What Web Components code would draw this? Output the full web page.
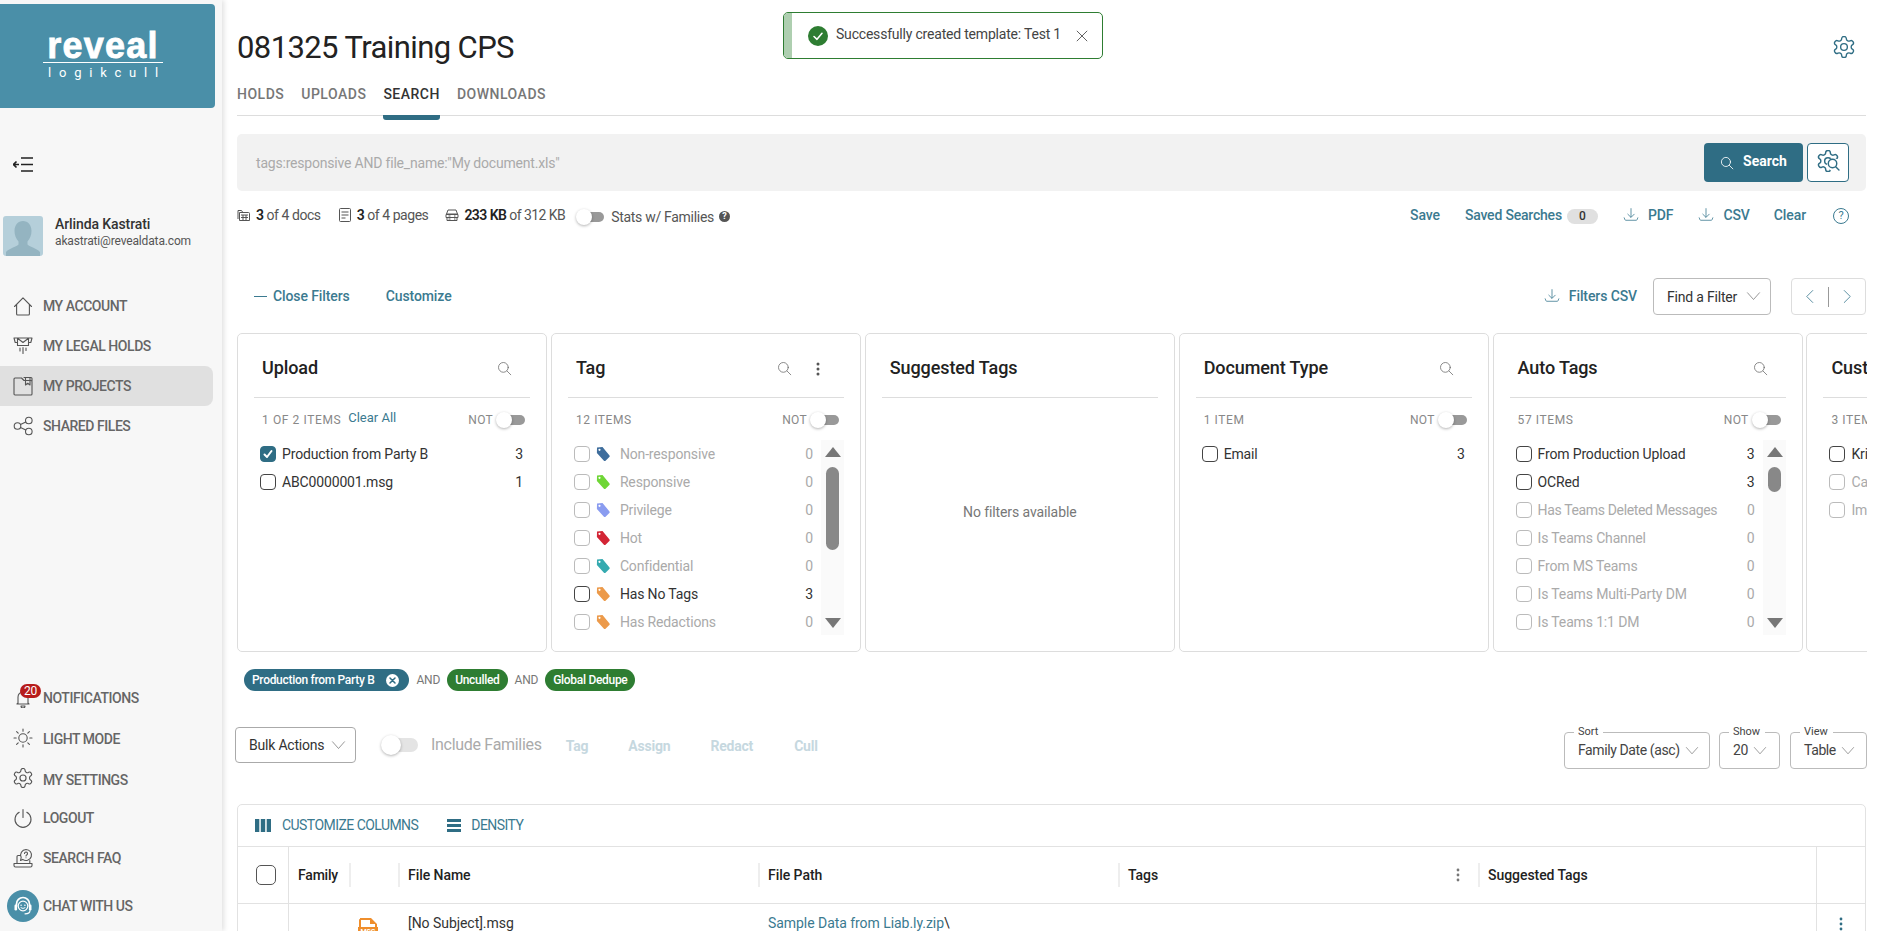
<!DOCTYPE html>
<html lang="en"><head><meta charset="utf-8"><title>Search</title>
<style>
html,body{margin:0;height:100%;background:#fff;overflow:hidden}
body{font-family:Roboto,"Liberation Sans",sans-serif;color:#333}
rv-app{display:flex;height:931px;width:1882px;overflow:hidden}
</style></head><body>
<rv-app></rv-app>
<script>
const S='fill="none" stroke="currentColor" stroke-linecap="round" stroke-linejoin="round"';
const GEAR='M12.22 2h-.44a2 2 0 0 0-2 2v.18a2 2 0 0 1-1 1.73l-.43.25a2 2 0 0 1-2 0l-.15-.08a2 2 0 0 0-2.73.73l-.22.38a2 2 0 0 0 .73 2.73l.15.1a2 2 0 0 1 1 1.72v.51a2 2 0 0 1-1 1.74l-.15.09a2 2 0 0 0-.73 2.73l.22.38a2 2 0 0 0 2.73.73l.15-.08a2 2 0 0 1 2 0l.43.25a2 2 0 0 1 1 1.73V20a2 2 0 0 0 2 2h.44a2 2 0 0 0 2-2v-.18a2 2 0 0 1 1-1.73l.43-.25a2 2 0 0 1 2 0l.15.08a2 2 0 0 0 2.73-.73l.22-.39a2 2 0 0 0-.73-2.73l-.15-.08a2 2 0 0 1-1-1.74v-.5a2 2 0 0 1 1-1.74l.15-.09a2 2 0 0 0 .73-2.73l-.22-.38a2 2 0 0 0-2.73-.73l-.15.08a2 2 0 0 1-2 0l-.43-.25a2 2 0 0 1-1-1.73V4a2 2 0 0 0-2-2z';
const ICONS={
 home:`<path d="M1.5 10.5 10 1.8l8.5 8.7M3.6 8.6V18a1 1 0 0 0 1 1h10.8a1 1 0 0 0 1-1V8.600"/>`,
 hold:`<path d="M1 2h18l-1.200 4.500H15.500M1 2l1.200 4.500H4.500M4.500 2v7.500h11V2M4.500 2.200 10 6.500l5.500-4.300M7 12v3M10 11.500v6M13 12v2.500"/>`,
 project:`<path d="M2 2h6.500l2.500 2.500h7a1 1 0 0 1 1 1V18a1 1 0 0 1-1 1H2a1 1 0 0 1-1-1V3a1 1 0 0 1 1-1zM11 1.500h7a1 1 0 0 1 1 1v2.500M12.500 2v7l2.200-1.700L17 9V2"/>`,
 share:`<circle cx="4.500" cy="10" r="3.300"/><circle cx="15.800" cy="4.500" r="3.300"/><circle cx="15.800" cy="15.500" r="3.300"/><path d="m7.500 8.500 5.300-2.500M7.500 11.500l5.300 2.500"/>`,
 bell:`<path d="M4 16h12M5 16V9a5 5 0 0 1 10 0v7M16 16l-1-1M4 16l1-1M8 18a2 2 0 0 0 4 0z"/>`,
 sun:`<circle cx="10" cy="10" r="4.200"/><path d="M10 1v2.200M10 16.800V19M1 10h2.200M16.800 10H19M3.600 3.600l1.600 1.600M14.800 14.800l1.600 1.600M3.600 16.400l1.600-1.600M14.800 5.200l1.600-1.600"/>`,
 power:`<path d="M10 1.500v8M6.200 4.300a8 8 0 1 0 7.600 0"/>`,
 faq:`<path d="M4 15.500V8.500a1 1 0 0 1 1-1h2.500M1 15.500h18v2a1.500 1.500 0 0 1-1.500 1.500h-15A1.500 1.500 0 0 1 1 17.500zM16.800 15.500v-3"/><path d="M13 1.500a5.500 5.500 0 1 1-3.300 9.900L7.500 12.500l.7-3A5.500 5.500 0 0 1 13 1.500z"/><path d="M11.500 5.500a1.500 1.500 0 1 1 2.200 1.400c-.5.300-.7.600-.7 1.100M13 9.700v.1"/>`,
 search:`<circle cx="8.500" cy="8.500" r="6.500"/><path d="m13.400 13.400 5 5"/>`,
 down:`<path d="M10 2v10.500M6 9l4 4 4-4M1.500 13.500l1 2.500a1 1 0 0 0 1 .6h13a1 1 0 0 0 1-.6l1-2.500"/>`,
 chev:`<path d="m2 5 8 9 8-9"/>`,
 left:`<path d="M13 2 5 10l8 8"/>`,
 right:`<path d="m7 2 8 8-8 8"/>`,
 x:`<path d="m3 3 14 14M17 3 3 17"/>`,
};
const ic=(n,size,sw=1)=>`<svg viewBox="0 0 20 20" width="${size}" height="${size}" ${S} stroke-width="${sw}" style="display:block;flex:none">${ICONS[n]}</svg>`;
const gear=(size,sw)=>`<svg viewBox="1.500 1.500 21 21" width="${size}" height="${size}" ${S} stroke-width="${sw}" style="display:block;flex:none"><path d="${GEAR}"/><circle cx="12" cy="12" r="3.200"/></svg>`;
class Base extends HTMLElement{
  connectedCallback(){ if(this.shadowRoot) return; this.attachShadow({mode:'open'}).innerHTML=`<style>${this.css()}</style>${this.html()}`; }
  a(n,d=''){return this.getAttribute(n)??d}
  css(){return ':host{display:block}'} html(){return '<slot></slot>'}
}
const def=(n,c)=>customElements.define(n,c);

def('rv-toggle',class extends Base{
  css(){return `:host{display:inline-block;flex:none;position:relative;width:var(--w,22px);height:var(--k,16px)}
  i{position:absolute;right:0;top:3px;bottom:3px;left:4px;border-radius:7px;background:var(--track,#999)}
  b{position:absolute;left:0;top:0;width:var(--k,16px);height:var(--k,16px);border-radius:50%;background:#fff;box-shadow:0 1px 3px rgba(0,0,0,.3)}`}
  html(){return '<i></i><b></b>'}
});
def('rv-check',class extends Base{
  css(){return `:host{display:block;flex:none;width:16px;height:16px;box-sizing:border-box;border:1px solid var(--c,#444);border-radius:4px;background:#fff}
  :host([on]){background:#2f6d84;border-color:#2f6d84;color:#fff}
  svg{display:block;margin:1px}`}
  html(){return this.hasAttribute('on')?`<svg viewBox="0 0 12 12" width="12" height="12" fill="none" stroke="#fff" stroke-width="2" stroke-linecap="round" stroke-linejoin="round"><path d="m2.500 6.500 2.500 2.500 4.500-6"/></svg>`:''}
});
def('rv-nav-item',class extends Base{
  css(){return `:host{display:flex;align-items:center;height:40px;padding-left:13px;gap:10px;font-size:14px;font-weight:500;letter-spacing:-.45px;color:#666;position:relative;width:200px;border-radius:0 8px 8px 0;white-space:nowrap}
  :host([active]){background:#e0e0e0}
  .i{width:20px;height:20px;color:#555;flex:none}
  .t{margin-top:var(--dy,0)}`}
  html(){return `<span class="i"><slot name="icon"></slot></span><span class="t"><slot></slot></span>`}
});
def('rv-sidebar',class extends Base{
  css(){return `:host{display:flex;flex-direction:column;flex:none;width:222px;height:931px;background:#f7f7f7;box-shadow:2px 0 5px rgba(0,0,0,.12);position:relative;z-index:2}
  .logo{margin-top:4px;width:215px;height:104px;background:#4a8fa8;border-radius:0 4px 4px 0;color:#fff;display:flex;flex-direction:column;align-items:center;box-sizing:border-box;padding:24px 9px 0 0}
  .rev{font:700 36px/36px "Liberation Sans",sans-serif;letter-spacing:1.200px;-webkit-text-stroke:.8px #fff;height:34px}
  .ln{width:120px;height:1px;background:#fff;margin-top:0}
  .lk{font:400 13px/16px Roboto,sans-serif;letter-spacing:7.800px;margin:2px 0 0 8px;white-space:nowrap}
  .col{margin:49px 0 0 13px;height:15px;color:#222}
  .user{display:flex;margin:44px 0 0 3px;height:40px;gap:12px}
  .av{width:40px;height:40px;border-radius:3px;background:#b5cfda;overflow:hidden;flex:none}
  .n{font-size:14px;font-weight:500;color:#333;line-height:15px;letter-spacing:-.1px;margin-top:1px}
  .e{font-size:12px;color:#555;line-height:15px;margin-top:2px;letter-spacing:-.15px}
  nav{margin-top:30px;display:flex;flex-direction:column}
  nav.b{margin-top:auto;padding-bottom:5px}
  .chat{margin-top:8px}
  .circ{position:absolute;left:-6px;top:-6px;width:32px;height:32px;border-radius:50%;background:#4a8fa8;display:flex;align-items:center;justify-content:center;color:#fff}
  .badge{position:absolute;left:7px;top:-4px;width:21px;height:14px;line-height:14px;border-radius:8px;background:#b71c1c;color:#fff;font-size:12px;text-align:center;font-weight:400;letter-spacing:-.2px}
  .w{position:relative;display:block;width:20px;height:20px}`}
  html(){const it=(n,t,x='')=>`<rv-nav-item ${x}><span slot="icon" class="w" style="color:#555">${n}</span>${t}</rv-nav-item>`;
   return `<div class="logo"><div class="rev">reveal</div><div class="ln"></div><div class="lk">logikcull</div></div>
   <div class="col"><svg width="20" height="15" viewBox="0 0 20 15" fill="none" stroke="currentColor" stroke-width="1.600" style="display:block"><path d="M8 1h12M8 7.500h12M8 14h12M0 7.500h6M3.500 4.500l-3 3 3 3"/></svg></div>
   <div class="user"><div class="av"><svg viewBox="0 0 40 40" width="40" height="40" style="display:block"><path fill="#94b4c1" d="M20 5c5 0 8.500 4 8.500 10 0 4-1.500 8-4 10.500v3c1.500 2 9 3.500 12.500 7.500v4H3v-4c3.500-4 11-5.500 12.500-7.500v-3c-2.500-2.500-4-6.500-4-10.500C11.500 9 15 5 20 5z"/></svg></div>
     <div><div class="n">Arlinda Kastrati</div><div class="e">akastrati@revealdata.com</div></div></div>
   <nav>${it(ic('home',20,1.100),'MY ACCOUNT')}${it(ic('hold',20,1.100),'MY LEGAL HOLDS')}${it(ic('project',20,1.100),'MY PROJECTS','active')}${it(ic('share',20,1.100),'SHARED FILES')}</nav>
   <nav class="b">${it(ic('bell',20,1.100)+'<span class="badge">20</span>','NOTIFICATIONS')}${it(ic('sun',20,1.100),'LIGHT MODE','style="--dy:1px"')}${it(gear(20,1.200),'MY SETTINGS','style="--dy:3px"')}${it(ic('power',20,1.100),'LOGOUT')}${it(ic('faq',20,1.100),'SEARCH FAQ')}
   <rv-nav-item class="chat"><span slot="icon" class="w"><span class="circ"><svg viewBox="0 0 24 24" width="24" height="24" fill="none" stroke="#fff" stroke-width="1.700" stroke-linecap="round"><path d="M5.500 12v-2a6.500 6.500 0 0 1 13 0v2"/><rect x="3.500" y="10.500" width="2.600" height="6" rx="1.200" fill="#fff" stroke="none"/><rect x="17.900" y="10.500" width="2.600" height="6" rx="1.200" fill="#fff" stroke="none"/><circle cx="12" cy="12" r="4.800" stroke-width="1.200"/><circle cx="10.100" cy="11.300" r=".8" fill="#fff" stroke="none"/><circle cx="13.900" cy="11.300" r=".8" fill="#fff" stroke="none"/><path d="M10 13.800q2 1.500 4 0" stroke-width="1"/><path d="M19 16.500c0 2-2 3.300-5 3.300" stroke-width="1.200"/></svg></span></span>CHAT WITH US</rv-nav-item></nav>`}
});
def('rv-toast',class extends Base{
  css(){return `:host{position:absolute;left:783px;top:12px;width:320px;height:47px;box-sizing:border-box;border:1px solid #2e7d32;border-radius:5px;background:#fff;display:flex;align-items:center;overflow:hidden;font-size:14px;color:#444;z-index:5}
  .s{width:8px;align-self:stretch;background:#aecfb0;flex:none}
  .c{margin-left:16px;margin-right:8px;flex:none}
  .t{width:224px;white-space:nowrap;position:relative;top:-2px;letter-spacing:-.2px}
  .x{margin-left:15px;color:#333}`}
  html(){return `<span class="s"></span><svg class="c" width="20" height="20" viewBox="0 0 20 20"><circle cx="10" cy="10" r="10" fill="#2e7d32"/><path d="m6 10.500 3 2.800 5-6" fill="none" stroke="#fff" stroke-width="1.600" stroke-linecap="round" stroke-linejoin="round"/></svg><span class="t"><slot></slot></span><span class="x">${ic('x',14,1.100)}</span>`}
});
def('rv-tabs',class extends Base{
  css(){return `:host{display:flex;gap:17px;height:31px;margin-top:16px;border-bottom:1px solid #ddd;font-size:14px;font-weight:500;letter-spacing:.5px;color:#777}
  span{line-height:20px;position:relative;height:31px}
  .on{color:#333}
  .on::after{content:"";position:absolute;left:0;right:0;top:31px;height:5px;background:#2f6d84;border-radius:0 0 3px 3px}`}
  html(){return `<span>HOLDS</span><span>UPLOADS</span><span class="on">SEARCH</span><span>DOWNLOADS</span>`}
});
def('rv-header',class extends Base{
  css(){return `:host{display:block;position:relative;padding-top:28px}
  h1{margin:0;font-size:31px;line-height:40px;font-weight:400;color:#222;letter-spacing:-.6px}
  .g{position:absolute;right:11px;top:36px;color:#2f6d84}`}
  html(){return `<h1>081325 Training CPS</h1><span class="g">${gear(22,1.300)}</span><rv-tabs></rv-tabs>`}
});
def('rv-searchbar',class extends Base{
  css(){return `:host{display:flex;align-items:center;margin-top:18px;height:57px;background:#f2f2f2;border-radius:5px;padding:0 17px 0 19px;font-size:14px;color:#aaa}
  .q{flex:1;letter-spacing:-.2px}
  .b{width:99px;height:39px;box-sizing:border-box;background:#2f6d84;border-radius:4px;color:#fff;font-weight:700;display:flex;align-items:center;justify-content:center;gap:9px;font-size:14px}
  .b span{position:relative;top:-2px}
  .g{margin-left:4px;width:42px;height:39px;box-sizing:border-box;background:#fff;border:1px solid #2f6d84;border-radius:4px;position:relative;color:#2f6d84;display:flex;align-items:center;justify-content:flex-start;padding:0 0 3px 9px}
  .m{position:absolute;left:19px;top:14px;background:#fff;border-radius:50%;color:#2f6d84}`}
  html(){return `<span class="q"><slot></slot></span><div class="b">${ic('search',14,1.200)}<span>Search</span></div><div class="g">${gear(22,1.400)}<span class="m">${ic('search',13,2.200)}</span></div>`}
});
def('rv-stat',class extends Base{
  css(){return `:host{display:inline-flex;align-items:center;gap:5px;font-size:14px;color:#555;white-space:nowrap;letter-spacing:-.45px}
  ::slotted(b){color:#222;font-weight:600}`}
  html(){return `<slot name="i"></slot><span><slot></slot></span>`}
});
def('rv-link',class extends Base{
  css(){return `:host{display:inline-flex;align-items:center;gap:9px;font-size:14px;font-weight:500;color:#3b7a90;white-space:nowrap;letter-spacing:-.1px}`}
  html(){const d=this.hasAttribute('dl');return `${d?`<span style="color:#3b7a90">${ic('down',16,1)}</span>`:''}<span><slot></slot></span>`}
});
def('rv-stats',class extends Base{
  css(){return `:host{display:flex;align-items:center;margin-top:14px;height:20px;color:#444}
  .sp{flex:1}
  rv-stat+rv-stat{margin-left:17px}
  .ttl{font-size:14px;color:#555;margin:4px 0 0 7px;letter-spacing:-.3px;white-space:nowrap}
  .h{margin:3px 0 0 5px;width:11px;height:11px;border-radius:50%;background:#555;color:#fff;font-size:9px;line-height:11px;text-align:center;font-weight:700}
  rv-toggle{--w:28px;margin:3px 0 0 11px}
  .bd{display:inline-block;width:31px;height:15px;line-height:15px;border-radius:8px;background:#e0e0e0;color:#333;text-align:center;margin-left:5px;font-size:12px;font-weight:500;position:relative;top:1px}
  .q{margin:2px 17px 0 27px;color:#3b7a90;width:16px;height:16px;box-sizing:border-box;border:1px solid #3b7a90;border-radius:50%;text-align:center;font-size:11px;line-height:14px}
  `}
  html(){const svg=(p)=>`<svg slot="i" viewBox="0 0 14 14" width="14" height="14" fill="none" stroke="#555" stroke-width="1" style="display:block">${p}</svg>`;
  return `<rv-stat>${svg('<path d="M1 11V2.500h3.500l1 1.500"/><path d="M2.500 12.500V4.500h9a1 1 0 0 1 1 1v7z" fill="#fff"/><path d="M4 7h7M4 9.500h7M6 7v5M9 7v5"/>')}<b>3</b> of 4 docs</rv-stat>
  <rv-stat>${svg('<rect x="1.500" y=".5" width="11" height="13" rx="1"/><path d="M3.500 4h7M3.500 7h7M3.500 10h4"/>')}<b>3</b> of 4 pages</rv-stat>
  <rv-stat style="letter-spacing:-.55px">${svg('<path d="M3 2h8l1.500 4h-11zM1 6.500h12v3H1zM2 9.500h10v3H2zM3.500 8h2M3.500 11h2M9 8h1.500M9 11h1.500"/>')}<b>233 KB</b> of 312 KB</rv-stat>
  <rv-toggle></rv-toggle><span class="ttl">Stats w/ Families</span><span class="h">?</span>
  <span class="sp"></span>
  <rv-link>Save</rv-link><rv-link style="margin-left:25px;letter-spacing:-.2px">Saved Searches</rv-link><span class="bd">0</span>
  <rv-link dl style="margin-left:25px">PDF</rv-link><rv-link dl style="margin-left:25px">CSV</rv-link><rv-link style="margin-left:24px">Clear</rv-link><span class="q">?</span>`}
});
def('rv-dropbtn',class extends Base{
  css(){return `:host{display:inline-flex;align-items:center;justify-content:space-between;box-sizing:border-box;height:37px;padding:0 9px 0 13px;border:1px solid #bbb;border-radius:4px;font-size:14px;color:#333;white-space:nowrap;background:#fff;letter-spacing:-.2px}`}
  html(){return `<span><slot></slot></span><span style="color:#666;margin-left:6px">${ic('chev',15,.9)}</span>`}
});
def('rv-filterbar',class extends Base{
  css(){return `:host{display:flex;align-items:center;margin-top:53px;height:37px;padding-left:17px}
  .d{width:13px;height:1.500px;background:#3b7a90;margin-right:6px}
  .sp{flex:1}
  rv-link{margin-bottom:2px}
  .p{width:75px;height:37px;box-sizing:border-box;border:1px solid #ddd;border-radius:4px;display:flex;align-items:center;justify-content:space-around;margin-left:20px;color:#3b7a90;padding:0 6px;position:relative}
  .p i{width:1px;height:20px;background:#999}`}
  html(){return `<span class="d"></span><rv-link>Close Filters</rv-link><rv-link style="margin-left:36px">Customize</rv-link><span class="sp"></span><rv-link dl style="margin-right:16px">Filters CSV</rv-link><rv-dropbtn style="width:118px">Find a Filter</rv-dropbtn><div class="p">${ic('left',15,1.100)}<i></i>${ic('right',15,1.100)}</div>`}
});
def('rv-tag',class extends Base{
  css(){return `:host{display:block;flex:none;width:14px;height:16px;color:var(--c)}`}
  html(){return `<svg viewBox="0 0 14 16" width="14" height="16"><path fill="currentColor" d="M1 1.500 6.500 1l6.800 8.200a1.500 1.500 0 0 1-.2 2.100l-3.300 3.200a1.500 1.500 0 0 1-2.100 0L.9 7z"/><circle cx="3.500" cy="3.800" r="1.100" fill="#fff"/></svg>`}
});
def('rv-row',class extends Base{
  css(){return `:host{display:flex;align-items:center;height:28px;font-size:14px;color:#333;white-space:nowrap;letter-spacing:-.15px}
  :host([off]){color:#aaa;--c:#bbb}
  .l{flex:1;display:flex;align-items:center;min-width:0;margin-left:6px;gap:10px;position:relative}
  .n{min-width:10px;text-align:right;font-size:14px}`}
  html(){const c=this.a('tag');return `<rv-check ${this.hasAttribute('on')?'on':''} ></rv-check><span class="l">${c?`<rv-tag style="--c:${c}"></rv-tag>`:''}<span class="t"><slot></slot></span></span><span class="n">${this.a('n')}</span>`}
});
def('rv-card',class extends Base{
  css(){return `:host{display:block;flex:none;width:310px;height:319px;box-sizing:border-box;border:1px solid #ddd;border-radius:5px;padding:0 16px;background:#fff;position:relative}
  .h{display:flex;align-items:center;height:64px;border-bottom:1px solid #ddd;padding:6px 0 0 8px;color:#777;box-sizing:border-box}
  h3{margin:0;flex:1;font-size:18px;font-weight:500;color:#222;letter-spacing:-.1px;position:relative;top:-1px;white-space:nowrap}
  .s{margin-right:18px;color:#666}
  .m{margin-right:24px;color:#555}
  .sub{display:flex;align-items:center;height:42px;box-sizing:border-box;padding:2px 0 0 8px;font-size:12px;color:#888;letter-spacing:.6px;white-space:nowrap}
  .c{margin-left:7px;color:#3b7a90;letter-spacing:0;font-size:13px;position:relative;top:-3px}
  .sp{flex:1}
  .nt{font-size:12px;letter-spacing:.3px;margin-right:3px}
  rv-toggle{--w:29px;--track:#999;margin-right:5px}
  .b{display:flex;position:relative;height:196px;margin-top:0}
  .rows{flex:1;min-width:0;padding:0 0 0 6px}
  .sb{width:23px;margin-left:8px;margin-right:0;height:195px;background:#fafafa;position:relative;flex:none;margin-top:0;color:#666}
  .sb .up,.sb .dn{position:absolute;left:4px;width:0;height:0;border-left:8px solid transparent;border-right:8px solid transparent}
  .sb .up{top:7px;border-bottom:10px solid #777}
  .sb .dn{bottom:7px;border-top:10px solid #777}
  .sb .th{position:absolute;left:5px;width:13px;border-radius:7px;background:#888;top:27px}
  .none{display:flex;height:228px;align-items:center;justify-content:center;font-size:14px;color:#777;position:relative;letter-spacing:-.1px}
  `}
  html(){const sub=this.a('sub'),thumb=this.a('thumb');const menu=this.hasAttribute('menu');
   const search=`<span class="s" style="${menu?'margin-right:24px':''}">${ic('search',15,1)}</span>`;
   if(this.hasAttribute('empty'))return `<div class="h"><h3>${this.a('title')}</h3></div><div class="none"><slot></slot></div>`;
   return `<div class="h"><h3>${this.a('title')}</h3>${search}${menu?`<span class="m"><svg width="4" height="16" viewBox="0 0 4 16" style="display:block"><circle cx="2" cy="3" r="1.500" fill="#555"/><circle cx="2" cy="8" r="1.500" fill="#555"/><circle cx="2" cy="13" r="1.500" fill="#555"/></svg></span>`:''}</div>
   <div class="sub"><span>${sub}</span>${this.hasAttribute('clear')?'<span class="c">Clear All</span>':''}<span class="sp"></span><span class="nt">NOT</span><rv-toggle></rv-toggle></div>
   <div class="b"><div class="rows" style="${thumb?'':'padding-right:7px'}"><slot></slot></div>${thumb?`<div class="sb"><span class="up"></span><span class="th" style="height:${thumb}px"></span><span class="dn"></span></div>`:''}</div>`}
});
def('rv-cards',class extends Base{
  css(){return `:host{display:flex;gap:3.900px;margin-top:18px;height:319px;overflow:hidden;margin-right:-1px}`}
});
def('rv-pill',class extends Base{
  css(){return `:host{display:inline-flex;align-items:center;height:22px;border-radius:11px;padding:0 8px;color:#fff;font-size:12px;font-weight:500;background:var(--bg,#2e7d32);white-space:nowrap;letter-spacing:-.3px;box-sizing:border-box}
  .x{width:13px;height:13px;border-radius:50%;background:#fff;margin-left:12px;margin-right:2px;display:block}`}
  html(){return `<slot></slot>${this.hasAttribute('x')?`<svg class="x" viewBox="0 0 13 13"><path d="m4 4 5 5M9 4 4 9" stroke="#2f6d84" stroke-width="1.500" stroke-linecap="round"/></svg>`:''}`}
});
def('rv-pills',class extends Base{
  css(){return `:host{display:flex;align-items:center;gap:7px;margin-top:17px;height:22px;padding-left:7px;font-size:12px;color:#777;letter-spacing:-.2px}`}
});
def('rv-field',class extends Base{
  css(){return `:host{display:block;box-sizing:border-box;height:37px;border:1px solid #bbb;border-radius:4px;position:relative;font-size:14px;color:#444;white-space:nowrap;flex:none}
  .lb{position:absolute;left:9px;top:-8px;font-size:11px;line-height:13px;background:#fff;padding:0 5px 0 4px;color:#444}
  .v{display:flex;align-items:center;height:35px;padding-left:13px;gap:5px;letter-spacing:-.4px}
  .v span{position:relative;top:-1px}`}
  html(){return `<span class="lb">${this.a('label')}</span><div class="v"><span><slot></slot></span><i style="color:#666">${ic('chev',14,.9)}</i></div>`}
});
def('rv-toolbar',class extends Base{
  css(){return `:host{display:flex;margin:36px -1px 0 -2px;height:36px;align-items:flex-start}
  rv-toggle{--w:37px;--k:20px;--track:#e4e4e4;margin:8px 0 0 25px}
  .f{font-size:16px;color:#aaa;margin:8px 0 0 13px;line-height:20px;white-space:nowrap;letter-spacing:-.3px}
  .a{font-size:14px;font-weight:700;color:#c6d8df;margin-top:9px;line-height:20px;letter-spacing:-.2px}
  .sp{flex:1}
  rv-field{margin-top:5px}`}
  html(){return `<rv-dropbtn style="width:121px;height:36px;border-color:#aaa">Bulk Actions</rv-dropbtn><rv-toggle></rv-toggle><span class="f">Include Families</span><span class="a" style="margin-left:24px">Tag</span><span class="a" style="margin-left:40px">Assign</span><span class="a" style="margin-left:40px">Redact</span><span class="a" style="margin-left:41px">Cull</span><span class="sp"></span>
  <rv-field label="Sort" style="width:146px">Family Date (asc)</rv-field><rv-field label="Show" style="width:61px;margin-left:9px">20</rv-field><rv-field label="View" style="width:77px;margin-left:10px">Table</rv-field>`}
});
def('rv-table',class extends Base{
  css(){return `:host{display:block;margin-top:41px;height:200px;box-sizing:border-box;border:1px solid #e2e2e2;border-radius:5px 5px 0 0;font-size:14px;color:#333;letter-spacing:-.05px;white-space:nowrap}
  .tb{display:flex;align-items:center;height:41px;border-bottom:1px solid #e2e2e2;padding-left:17px;color:#3b7a90;font-size:14px;letter-spacing:-.55px}
  .tb span{position:relative;top:-1px}
  .g{display:grid;grid-template-columns:50px 61px 49px 360px 360px 360px 338px 1fr;}
  .hd{height:56px;border-bottom:1px solid #e2e2e2;align-items:center;font-weight:500;color:#222}
  .hd>div,.r>div{display:flex;align-items:center;height:100%;box-sizing:border-box;padding-left:10px;position:relative}
  .hd>.d::before{content:"";position:absolute;left:0;top:16px;bottom:16px;width:2px;background:#eee}
  .v{border-left:1px solid #e2e2e2}
  .r{height:60px}
  .r>div{align-items:flex-start;padding-top:11px;font-weight:400}
  .lnk{color:#3b7a90}
  `}
  html(){const dots=(c)=>`<svg width="4" height="16" viewBox="0 0 4 16" style="display:block"><circle cx="2" cy="3" r="1.400" fill="${c}"/><circle cx="2" cy="8" r="1.400" fill="${c}"/><circle cx="2" cy="13" r="1.400" fill="${c}"/></svg>`;
  return `<div class="tb"><svg width="16" height="13" viewBox="0 0 16 13" style="margin-right:11px"><path fill="#2f6d84" d="M0 0h4.300v13H0zM5.800 0h4.400v13H5.800zM11.700 0H16v13h-4.300z"/></svg><span>CUSTOMIZE COLUMNS</span><svg width="14" height="13" viewBox="0 0 14 13" style="margin:0 10px 0 29px"><path fill="#2f6d84" d="M0 0h14v3H0zM0 5h14v3H0zM0 10h14v3H0z"/></svg><span>DENSITY</span></div>
  <div class="g hd"><div style="padding-left:18px"><rv-check style="width:20px;height:20px;border-radius:5px;--c:#555"></rv-check></div><div class="v" style="padding-left:9px"><span style="letter-spacing:-.2px">Family</span></div><div class="d"></div><div class="d">File Name</div><div class="d">File Path</div><div class="d">Tags<span style="position:absolute;right:18px;top:20px">${dots('#777')}</span></div><div class="d">Suggested Tags</div><div class="v"></div></div>
  <div class="g r"><div></div><div class="v"></div><div style="padding:14px 0 0 9px"><svg width="20" height="24" viewBox="0 0 20 24" style="display:block"><path fill="#ef8e2c" d="M2 0h11l6 6v3h1v12H0V9h1V2a1 1 0 0 1 1-1z"/><path fill="#fff" d="M3 2h9v4h5v3H3z"/><text x="10" y="15.500" text-anchor="middle" font-size="7" font-weight="700" fill="#fff" font-family="Roboto">MSG</text></svg></div><div>[No Subject].msg</div><div><span class="lnk">Sample Data from Liab.ly.zip</span>\\</div><div></div><div></div><div class="v" style="padding:12px 0 0 22px">${dots('#2f6d84')}</div></div>`}
});
def('rv-main',class extends Base{
  css(){return `:host{display:block;flex:1;min-width:0;padding:0 16px 0 15px;height:931px;box-sizing:border-box;overflow:hidden;position:relative}`}
});
def('rv-app',class extends Base{
  css(){return `:host{display:flex;position:relative}`}
  html(){return `<rv-sidebar></rv-sidebar><rv-main>
   <rv-header></rv-header>
   <rv-searchbar>tags:responsive AND file_name:"My document.xls"</rv-searchbar>
   <rv-stats></rv-stats>
   <rv-filterbar></rv-filterbar>
   <rv-cards>
    <rv-card title="Upload" sub="1 OF 2 ITEMS" clear>
      <rv-row on n="3">Production from Party B</rv-row><rv-row n="1">ABC0000001.msg</rv-row>
    </rv-card>
    <rv-card title="Tag" sub="12 ITEMS" menu thumb="83">
      <rv-row off tag="#3e6d9c" n="0">Non-responsive</rv-row><rv-row off tag="#6fd636" n="0">Responsive</rv-row><rv-row off tag="#8a9cf0" n="0">Privilege</rv-row><rv-row off tag="#d32535" n="0">Hot</rv-row><rv-row off tag="#35aab0" n="0">Confidential</rv-row><rv-row tag="#ec9a4a" n="3">Has No Tags</rv-row><rv-row off tag="#ec9a4a" n="0">Has Redactions</rv-row>
    </rv-card>
    <rv-card title="Suggested Tags" empty>No filters available</rv-card>
    <rv-card title="Document Type" sub="1 ITEM"><rv-row n="3">Email</rv-row></rv-card>
    <rv-card title="Auto Tags" sub="57 ITEMS" thumb="25">
      <rv-row n="3">From Production Upload</rv-row><rv-row n="3">OCRed</rv-row><rv-row off n="0" style="letter-spacing:-.35px">Has Teams Deleted Messages</rv-row><rv-row off n="0">Is Teams Channel</rv-row><rv-row off n="0">From MS Teams</rv-row><rv-row off n="0">Is Teams Multi-Party DM</rv-row><rv-row off n="0">Is Teams 1:1 DM</rv-row>
    </rv-card>
    <rv-card title="Custodian" sub="3 ITEMS"><rv-row n="3">Kristin</rv-row><rv-row off n="0">Carol</rv-row><rv-row off n="0">Import</rv-row></rv-card>
   </rv-cards>
   <rv-pills><rv-pill x style="--bg:#2f6d84">Production from Party B</rv-pill><span>AND</span><rv-pill>Unculled</rv-pill><span>AND</span><rv-pill>Global Dedupe</rv-pill></rv-pills>
   <rv-toolbar></rv-toolbar>
   <rv-table></rv-table>
  </rv-main><rv-toast>Successfully created template: Test 1</rv-toast>`}
});
</script>
</body></html>
